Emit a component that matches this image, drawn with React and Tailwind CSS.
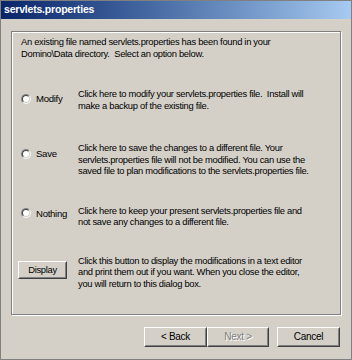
import React from "react";

const font = { fontFamily: '"Liberation Sans", Arial, sans-serif' };

const Radio = () => (
  <span className="relative inline-block w-[10px] h-[10px] rounded-full bg-white border border-t-[#808080] border-l-[#808080] border-r-[#f4f4f4] border-b-[#f4f4f4]">
    <span className="absolute inset-0 rounded-full border border-t-[#404040] border-l-[#404040] border-r-[#d4d0c8] border-b-[#d4d0c8]" />
  </span>
);

const WinButton = ({ children, disabled, className = "" }) => (
  <div
    className={`flex items-center justify-center bg-[#d4d0c8] border border-t-white border-l-white border-r-[#404040] border-b-[#404040] ${className}`}
  >
    <div className="flex items-center justify-center w-full h-full border border-t-transparent border-l-transparent border-r-[#808080] border-b-[#808080]">
      {disabled ? (
        <span className="text-[#808080] [text-shadow:1px_1px_0_#ffffff]">{children}</span>
      ) : (
        <span className="text-black">{children}</span>
      )}
    </div>
  </div>
);

const OptionRow = ({ left, lines, mt, leftMt }) => (
  <div className="flex items-start" style={{ marginTop: mt }}>
    <div className="w-[57px] shrink-0 flex items-center gap-[5px]" style={{ marginTop: leftMt }}>
      {left}
    </div>
    <div>
      {lines.map((l, i) => (
        <div key={i} className="whitespace-pre">{l}</div>
      ))}
    </div>
  </div>
);

export default function App() {
  return (
    <div
      className="w-[352px] h-[360px] bg-[#d4d0c8] border border-[#808080] flex flex-col text-[9.4px] leading-[11.5px] tracking-[-0.3px] text-black overflow-hidden"
      style={font}
    >
      {/* Title bar */}
      <div className="h-[18px] shrink-0 flex items-center px-[3px] bg-gradient-to-r from-[#0a246a] to-[#a6caf0]">
        <span className="text-white font-bold text-[10.5px] tracking-[-0.2px]">servlets.properties</span>
      </div>

      {/* Group box */}
      <div className="mt-[12px] mx-[10px] h-[284px] border border-[#808080] shadow-[inset_1px_1px_0_#ffffff,1px_1px_0_#ffffff] px-[9px] pt-[4px]">
        <div className="whitespace-pre">
          <div>An existing file named servlets.properties has been found in your</div>
          <div>Domino\Data directory.  Select an option below.</div>
        </div>

        <OptionRow
          mt="29px"
          leftMt="5px"
          left={<><Radio /><span className="text-[9.6px]">Modify</span></>}
          lines={[
            "Click here to modify your servlets.properties file.  Install will",
            "make a backup of the existing file.",
          ]}
        />

        <OptionRow
          mt="31px"
          leftMt="6px"
          left={<><Radio /><span className="text-[9.6px]">Save</span></>}
          lines={[
            "Click here to save the changes to a different file. Your",
            "servlets.properties file will not be modified. You can use the",
            "saved file to plan modifications to the servlets.properties file.",
          ]}
        />

        <OptionRow
          mt="28px"
          leftMt="3px"
          left={<><Radio /><span className="text-[9.6px]">Nothing</span></>}
          lines={[
            "Click here to keep your present servlets.properties file and",
            "not save any changes to a different file.",
          ]}
        />

        <div className="flex items-start mt-[27px]">
          <div className="w-[57px] shrink-0 pt-[6px]">
            <WinButton className="w-[49px] h-[18px] -ml-[3px]">Display</WinButton>
          </div>
          <div>
            <div className="whitespace-pre">Click this button to display the modifications in a text editor</div>
            <div className="whitespace-pre">and print them out if you want. When you close the editor,</div>
            <div className="whitespace-pre">you will return to this dialog box.</div>
          </div>
        </div>
      </div>

      {/* Bottom buttons */}
      <div className="flex justify-end mt-[12px] pr-[11px] text-[10px]">
        <WinButton className="w-[63px] h-[20px]">&lt; Back</WinButton>
        <WinButton disabled className="w-[62px] h-[20px]">Next &gt;</WinButton>
        <WinButton className="w-[63px] h-[20px] ml-[8px]">Cancel</WinButton>
      </div>
    </div>
  );
}
